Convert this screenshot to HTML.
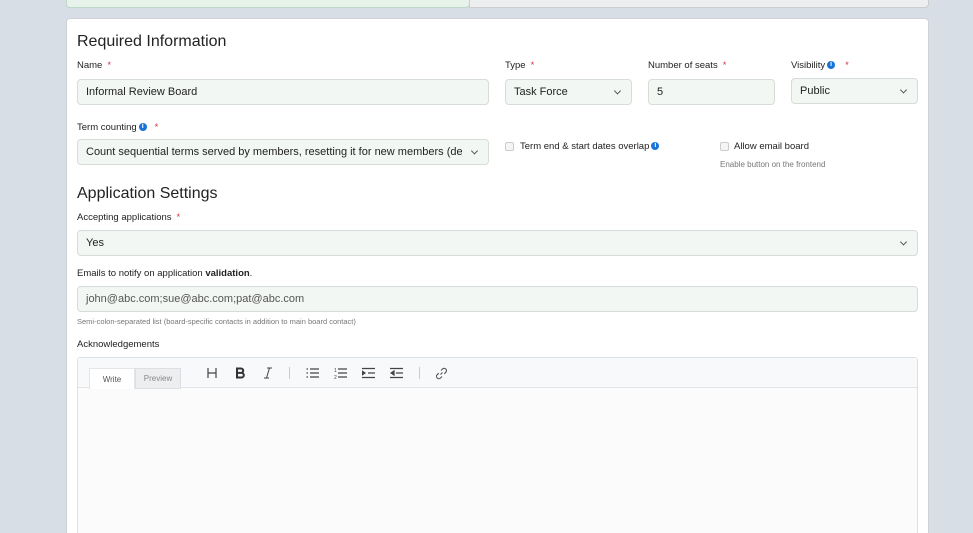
<!DOCTYPE html>
<html><head><style>
*{box-sizing:border-box;margin:0;padding:0}
html,body{width:973px;height:533px;overflow:hidden}
body{background:#d8dee6;font-family:"Liberation Sans",sans-serif;color:#212529;position:relative}
.a{position:absolute}
.top1{left:66px;top:-4px;width:404px;height:12px;background:#e6f2ea;border:1px solid #bcd8c6;border-radius:0 0 4px 4px}
.top2{left:469px;top:-4px;width:460px;height:12px;background:#eceeef;border:1px solid #ccc;border-radius:0 0 4px 0}
.card{left:66px;top:18px;width:863px;height:530px;background:#fff;border:1px solid #cfd3d8;border-radius:4px}
h2{position:absolute;font-weight:normal;font-size:16px;color:#222}
.lb{position:absolute;font-size:9.5px;color:#222}
.lb .s{color:#d0344c;margin-left:5px}
.inp{position:absolute;background:#f3f7f3;border:1px solid #d6dcd6;border-radius:4px;font-size:11px;padding-left:8px;display:flex;align-items:center;color:#222;white-space:nowrap;overflow:hidden}
.inp .t{overflow:hidden;display:block}
.chev{position:absolute;right:11px;top:50%;width:5px;height:5px;border-right:1px solid #555;border-bottom:1px solid #555;transform:translateY(-70%) rotate(45deg)}
.i{display:inline-block;width:8px;height:8px;border-radius:50%;background:#1a73d9;color:#fff;font-size:7px;font-weight:bold;text-align:center;line-height:8px;vertical-align:middle;margin-left:2px}
.cb{position:absolute;width:9px;height:9px;border:1px solid #ccc;border-radius:2px;background:#f5f5f5}
.sm{position:absolute;font-size:8px;color:#777}
.ed{left:77px;top:357px;width:841px;height:200px;border:1px solid #dde0e4;border-radius:3px;background:#fbfbfb}
.tb{position:absolute;left:0;top:0;width:100%;height:30px;background:#f8f9fa;border-bottom:1px solid #e3e5e8}
.tab{position:absolute;top:10px;height:21px;font-size:8px;display:flex;align-items:center;justify-content:center}
.ic{position:absolute;top:9px}
</style></head><body>
<div class="a top1"></div><div class="a top2"></div>
<div class="a card"></div>
<h2 style="left:77px;top:33px">Required Information</h2>
<div class="lb" style="left:77px;top:60px">Name<span class="s">*</span></div>
<div class="inp" style="left:77px;top:79px;width:412px;height:26px">Informal Review Board</div>
<div class="lb" style="left:505px;top:60px">Type<span class="s">*</span></div>
<div class="inp" style="left:505px;top:79px;width:127px;height:26px">Task Force<span class="chev"></span></div>
<div class="lb" style="left:648px;top:60px">Number of seats<span class="s">*</span></div>
<div class="inp" style="left:648px;top:79px;width:127px;height:26px">5</div>
<div class="lb" style="left:791px;top:60px">Visibility<span class="i">i</span><span class="s" style="margin-left:10px">*</span></div>
<div class="inp" style="left:791px;top:78px;width:127px;height:26px">Public<span class="chev"></span></div>
<div class="lb" style="left:77px;top:122px">Term counting<span class="i">i</span><span class="s" style="margin-left:8px">*</span></div>
<div class="inp" style="left:77px;top:139px;width:412px;height:26px;padding-right:26px"><span class="t">Count sequential terms served by members, resetting it for new members (default)</span><span class="chev"></span></div>
<div class="cb" style="left:505px;top:142px"></div>
<div class="lb" style="left:520px;top:141px">Term end &amp; start dates overlap<span class="i">i</span></div>
<div class="cb" style="left:720px;top:142px"></div>
<div class="lb" style="left:734px;top:141px">Allow email board</div>
<div class="sm" style="left:720px;top:160px">Enable button on the frontend</div>
<h2 style="left:77px;top:185px">Application Settings</h2>
<div class="lb" style="left:77px;top:212px">Accepting applications<span class="s">*</span></div>
<div class="inp" style="left:77px;top:230px;width:841px;height:26px">Yes<span class="chev"></span></div>
<div class="lb" style="left:77px;top:268px">Emails to notify on application <b>validation</b>.</div>
<div class="inp" style="left:77px;top:286px;width:841px;height:26px;color:#555">john@abc.com;sue@abc.com;pat@abc.com</div>
<div class="sm" style="left:77px;top:317px;font-size:7.5px">Semi-colon-separated list (board-specific contacts in addition to main board contact)</div>
<div class="lb" style="left:77px;top:339px">Acknowledgements</div>
<div class="a ed">
 <div class="tb">
  <div class="tab" style="left:11px;width:46px;background:#fff;border:1px solid #e3e5e8;border-bottom:none;color:#555">Write</div>
  <div class="tab" style="left:57px;width:46px;background:#eceef0;border:1px solid #dcdfe3;color:#888">Preview</div>
  <svg class="ic" style="left:128px" width="12" height="12" viewBox="0 0 12 12" fill="none" stroke="#444" stroke-width="1.2"><path d="M2 1v10M10 1v10M2 6h8"/></svg>
  <svg class="ic" style="left:156px" width="12" height="12" viewBox="0 0 12 12" fill="none" stroke="#333" stroke-width="2"><path d="M3 1.5h4a2.2 2.2 0 0 1 0 4.4H3zM3 5.9h4.5a2.3 2.3 0 0 1 0 4.6H3zM3 1v10"/></svg>
  <svg class="ic" style="left:184px" width="12" height="12" viewBox="0 0 12 12" fill="none" stroke="#444" stroke-width="1"><path d="M5 1h5M2 11h5M7.5 1 4.5 11"/></svg>
  <div class="a" style="left:211px;top:9px;width:1px;height:12px;background:#ccc"></div>
  <svg class="ic" style="left:228px" width="13" height="12" viewBox="0 0 13 12" fill="none" stroke="#444" stroke-width="1.2"><path d="M4 2h9M4 6h9M4 10h9M0.5 2h1.5M0.5 6h1.5M0.5 10h1.5"/></svg>
  <svg class="ic" style="left:256px" width="13" height="12" viewBox="0 0 13 12" fill="none" stroke="#444" stroke-width="1.2"><path d="M4 2h9M4 6h9M4 10h9"/><text x="0" y="5" font-size="5" fill="#444" stroke="none">1</text><text x="0" y="12" font-size="5" fill="#444" stroke="none">2</text></svg>
  <svg class="ic" style="left:284px" width="13" height="12" viewBox="0 0 13 12" fill="none" stroke="#444" stroke-width="1.2"><path d="M0 1.5h13M6 6h7M0 10.5h13"/><path d="M0 4l3 2-3 2z" fill="#444"/></svg>
  <svg class="ic" style="left:312px" width="13" height="12" viewBox="0 0 13 12" fill="none" stroke="#444" stroke-width="1.2"><path d="M0 1.5h13M6 6h7M0 10.5h13"/><path d="M4 4 1 6l3 2z" fill="#444"/></svg>
  <div class="a" style="left:341px;top:9px;width:1px;height:12px;background:#ccc"></div>
  <svg class="ic" style="left:357px" width="13" height="13" viewBox="0 0 13 13" fill="none" stroke="#555" stroke-width="1.1"><path d="M5.5 7.5l2-2M6 3.5l1.5-1.5a2.3 2.3 0 0 1 3.3 3.3L9.3 6.8M7 9.5l-1.5 1.5a2.3 2.3 0 0 1-3.3-3.3L3.7 6.2"/></svg>
 </div>
</div>
</body></html>
